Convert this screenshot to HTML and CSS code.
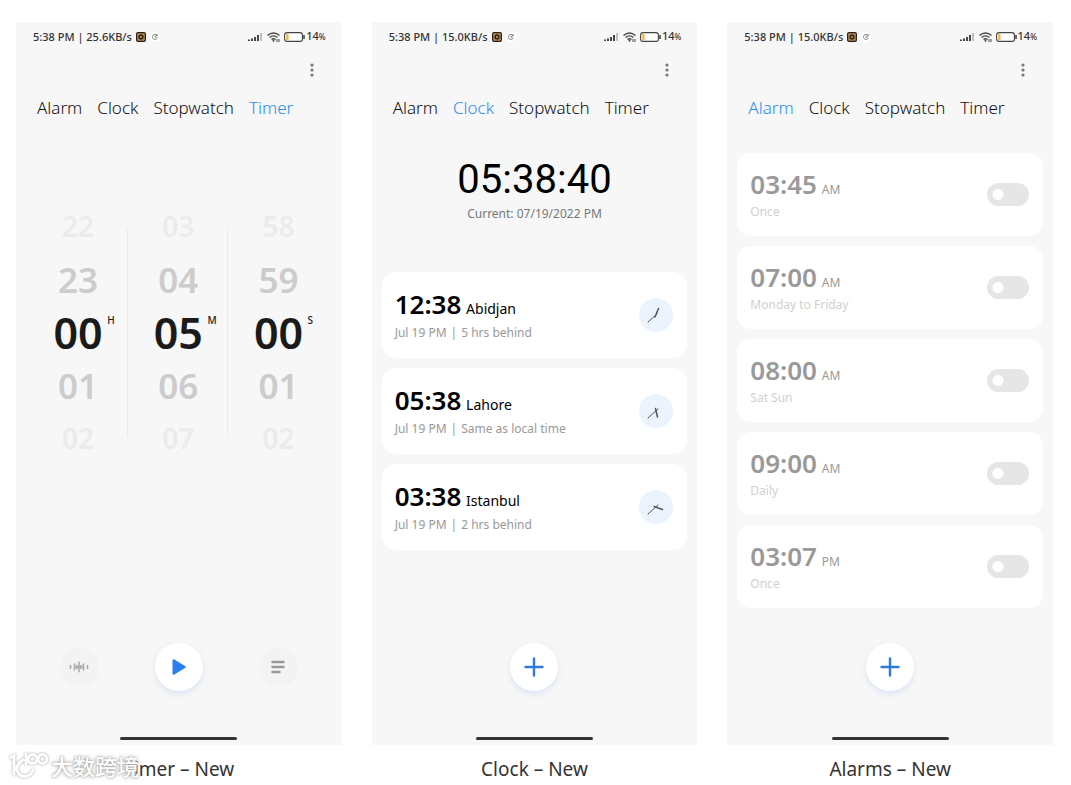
FILE: index.html
```html
<!DOCTYPE html>
<html lang="en">
<head>
    <meta charset="UTF-8">
    <meta name="viewport" content="width=device-width, initial-scale=1.0">
    <title>Clock App</title>
    <link rel="stylesheet" href="styles.css">
</head>
<body>

<!-- SHARED ICONS -->
<svg class="hidden">
    <symbol id="chip" viewBox="0 0 10 10">
        <rect width="10" height="10" rx="2" fill="#2b211a"/>
        <rect x="1.2" y="1.2" width="7.6" height="7.6" rx="1" fill="#b88f58"/>
        <path d="M5 1.800v6.400M1.800 5h6.400M2.800 2.800l4.400 4.400M7.200 2.800L2.800 7.200" stroke="#2b211a" stroke-width="1.100"/>
        <circle cx="5" cy="5" r="2" fill="#2b211a"/>
        <circle cx="5" cy="5" r="1" fill="#d6a765"/>
    </symbol>
    <symbol id="sync" viewBox="0 0 10 10">
        <circle cx="5" cy="5" r="5" fill="#fff"/>
        <path d="M7 3.4A2.5 2.5 0 1 0 7.4 5.6M5 3.8V5.2H6.4M7.3 2.2V3.8H5.8" fill="none" stroke="#555" stroke-width="0.7"/>
    </symbol>
    <symbol id="status" viewBox="0 0 58 12">
        <path d="M1 10V8.5M4 10V7.5M7 10V6M10 10V4" stroke="#333" stroke-width="1.8"/>
        <path d="M13 10V2" stroke="#aaa" stroke-width="1.4"/>
        <g fill="none" stroke="#444" stroke-width="1.4">
            <path d="M19.5 4.5Q25.5 -.5 31.5 4.5M21.5 6.5Q25.5 3.2 29.5 6.5M23.5 8.4Q25.5 7 27.5 8.4"/>
        </g>
        <circle cx="25.5" cy="9.8" r="1" fill="#444"/>
        <path d="M29 8v3M31 8v3" stroke="#444" stroke-width="1"/>
        <rect x="36.6" y="1.6" width="17.8" height="8.8" rx="2.5" fill="#fff" stroke="#444" stroke-width="1.1"/>
        <rect x="38.3" y="3" width="2.2" height="6" fill="#f0b040"/>
        <path d="M56 4v4" stroke="#444" stroke-width="1.6"/>
    </symbol>
    <symbol id="dots" viewBox="0 0 4 14">
        <circle cx="2" cy="2" r="1.6"/><circle cx="2" cy="7" r="1.6"/><circle cx="2" cy="12" r="1.6"/>
    </symbol>
    <symbol id="plus" viewBox="0 0 20 20">
        <path d="M10 1.5v17M1.5 10h17" stroke="#2e7bdc" stroke-width="2.4" stroke-linecap="round"/>
    </symbol>
</svg>

<main class="screens">
    <!-- TIMER -->
    <figure class="screen">
        <section class="phone">
            <div class="status">
                <span>5:38 PM | 25.6KB/s</span>
                <svg class="small-icon"><use href="#chip"/></svg>
                <svg class="small-icon"><use href="#sync"/></svg>
                <svg class="status-icons"><use href="#status"/></svg>
                <span>14<small>%</small></span>
            </div>
            <button class="menu-btn" aria-label="More options"><svg><use href="#dots"/></svg></button>
            <nav class="tabs">
                <a href="#alarm">Alarm</a>
                <a href="#clock">Clock</a>
                <a href="#stopwatch">Stopwatch</a>
                <a href="#timer" class="active">Timer</a>
            </nav>
            <div class="wheels">
                <div class="wheel">
                    <span class="far">22</span>
                    <span class="near">23</span>
                    <span class="current">00<sup>H</sup></span>
                    <span class="near">01</span>
                    <span class="far">02</span>
                </div>
                <div class="wheel">
                    <span class="far">03</span>
                    <span class="near">04</span>
                    <span class="current">05<sup>M</sup></span>
                    <span class="near">06</span>
                    <span class="far">07</span>
                </div>
                <div class="wheel">
                    <span class="far">58</span>
                    <span class="near">59</span>
                    <span class="current">00<sup>S</sup></span>
                    <span class="near">01</span>
                    <span class="far">02</span>
                </div>
            </div>
            <div class="actions">
                <button class="side-btn" aria-label="Sound">
                    <svg width="20" height="12" viewBox="0 0 20 12">
                        <path d="M1.5 4.5v3M5.5 3v6M8 4.500v3M10 1.2v9.6M12 4.5v3M14.5 3v6M18.5 4.5v3M5.5 6h9" stroke="#aaa" stroke-width="1.6" stroke-linecap="round"/>
                    </svg>
                </button>
                <button class="main-btn" aria-label="Start">
                    <svg width="16" height="18" viewBox="0 0 16 18">
                        <path d="M2.500 2.2v13.6L13.8 9z" fill="#2680f0" stroke="#2680f0" stroke-width="2" stroke-linejoin="round"/>
                    </svg>
                </button>
                <button class="side-btn" aria-label="Timer list">
                    <svg width="14" height="14" viewBox="0 0 14 14">
                        <path d="M1.5 2h11M1.5 7h11M1.5 12h7" stroke="#999" stroke-width="2.4" stroke-linecap="round"/>
                    </svg>
                </button>
            </div>
            <div class="home-bar"></div>
        </section>
        <figcaption>Timer – New</figcaption>
    </figure>

    <!-- CLOCK -->
    <figure class="screen">
        <section class="phone">
            <div class="status">
                <span>5:38 PM | 15.0KB/s</span>
                <svg class="small-icon"><use href="#chip"/></svg>
                <svg class="small-icon"><use href="#sync"/></svg>
                <svg class="status-icons"><use href="#status"/></svg>
                <span>14<small>%</small></span>
            </div>
            <button class="menu-btn" aria-label="More options"><svg><use href="#dots"/></svg></button>
            <nav class="tabs">
                <a href="#alarm">Alarm</a>
                <a href="#clock" class="active">Clock</a>
                <a href="#stopwatch">Stopwatch</a>
                <a href="#timer">Timer</a>
            </nav>
            <div class="now">
                <div class="now-time">05:38:40</div>
                <div class="now-date">Current: 07/19/2022 PM</div>
            </div>
            <div class="cards clocks">
                <div class="card">
                    <div>
                        <div class="time">12:38 <span>Abidjan</span></div>
                        <div class="note">Jul 19 PM<i>|</i>5 hrs behind</div>
                    </div>
                    <svg class="dial" viewBox="0 0 34 34">
                        <circle cx="17" cy="17" r="17"/>
                        <path d="M18 16L9 24"/><path class="hour" d="M16 19L19.5 10.5"/>
                    </svg>
                </div>
                <div class="card">
                    <div>
                        <div class="time">05:38 <span>Lahore</span></div>
                        <div class="note">Jul 19 PM<i>|</i>Same as local time</div>
                    </div>
                    <svg class="dial" viewBox="0 0 34 34">
                        <circle cx="17" cy="17" r="17"/>
                        <path d="M19 15L9 24"/><path class="hour" d="M16.5 14.5L18.5 23"/>
                    </svg>
                </div>
                <div class="card">
                    <div>
                        <div class="time">03:38 <span>Istanbul</span></div>
                        <div class="note">Jul 19 PM<i>|</i>2 hrs behind</div>
                    </div>
                    <svg class="dial" viewBox="0 0 34 34">
                        <circle cx="17" cy="17" r="17"/>
                        <path d="M19 15L9 24"/><path class="hour" d="M15 16.5L23.5 19.5"/>
                    </svg>
                </div>
            </div>
            <div class="actions">
                <button class="main-btn" aria-label="Add city"><svg width="20" height="20"><use href="#plus"/></svg></button>
            </div>
            <div class="home-bar"></div>
        </section>
        <figcaption>Clock – New</figcaption>
    </figure>

    <!-- ALARMS -->
    <figure class="screen">
        <section class="phone">
            <div class="status">
                <span>5:38 PM | 15.0KB/s</span>
                <svg class="small-icon"><use href="#chip"/></svg>
                <svg class="small-icon"><use href="#sync"/></svg>
                <svg class="status-icons"><use href="#status"/></svg>
                <span>14<small>%</small></span>
            </div>
            <button class="menu-btn" aria-label="More options"><svg><use href="#dots"/></svg></button>
            <nav class="tabs">
                <a href="#alarm" class="active">Alarm</a>
                <a href="#clock">Clock</a>
                <a href="#stopwatch">Stopwatch</a>
                <a href="#timer">Timer</a>
            </nav>
            <div class="cards alarms">
                <div class="card">
                    <label for="alarm1">
                        <span class="time">03:45 <span>AM</span></span>
                        <span class="note">Once</span>
                    </label>
                    <input type="checkbox" class="toggle" id="alarm1">
                </div>
                <div class="card">
                    <label for="alarm2">
                        <span class="time">07:00 <span>AM</span></span>
                        <span class="note">Monday to Friday</span>
                    </label>
                    <input type="checkbox" class="toggle" id="alarm2">
                </div>
                <div class="card">
                    <label for="alarm3">
                        <span class="time">08:00 <span>AM</span></span>
                        <span class="note">Sat Sun</span>
                    </label>
                    <input type="checkbox" class="toggle" id="alarm3">
                </div>
                <div class="card">
                    <label for="alarm4">
                        <span class="time">09:00 <span>AM</span></span>
                        <span class="note">Daily</span>
                    </label>
                    <input type="checkbox" class="toggle" id="alarm4">
                </div>
                <div class="card">
                    <label for="alarm5">
                        <span class="time">03:07 <span>PM</span></span>
                        <span class="note">Once</span>
                    </label>
                    <input type="checkbox" class="toggle" id="alarm5">
                </div>
            </div>
            <div class="actions">
                <button class="main-btn" aria-label="Add alarm"><svg width="20" height="20"><use href="#plus"/></svg></button>
            </div>
            <div class="home-bar"></div>
        </section>
        <figcaption>Alarms – New</figcaption>
    </figure>
</main>

<!-- WATERMARK -->
<div class="watermark">
    <svg width="42" height="30" viewBox="0 0 42 30" fill="none" stroke="#fff" stroke-width="3" stroke-linecap="round">
        <path d="M3 6.5L6 5V23M15 9Q8 13 9 19Q11 26 17 25.5Q23 25 25 19M18 3V13"/>
        <circle cx="24.5" cy="8" r="4.5"/>
        <circle cx="34.5" cy="8" r="4.5"/>
    </svg>
    <span>大数跨境</span>
</div>

</body>
</html>
```
FILE: styles.css
```css
* {
    box-sizing: border-box;
}
body {
    margin: 0;
    padding: 22px 18px 0 16px;
    font-family: "Noto Sans", "Noto Sans CJK SC", sans-serif;
    background: #fff;
    color: #111;
}
.hidden {
    display: none;
}
button {
    padding: 0;
    border: none;
    background: none;
    cursor: pointer;
}
.screens {
    display: grid;
    grid-template-columns: repeat(3, 1fr);
    gap: 30px;
}
.screen {
    margin: 0;
}
.phone {
    display: flex;
    flex-direction: column;
    min-height: calc(100vh - 62px);
    padding-bottom: 5px;
    background: #f7f7f7;
}
figcaption {
    padding-top: 10px;
    text-align: center;
    font-size: 19px;
    line-height: 28px;
    color: #333;
}

/* status bar */
.status {
    display: flex;
    align-items: center;
    gap: 4px;
    padding: 6px 16px 0 17px;
    font-size: 11px;
    line-height: 16px;
    font-weight: 500;
    color: #333;
}
.status small {
    font-size: 8px;
}
.small-icon {
    width: 10px;
    height: 10px;
}
.status-icons {
    width: 58px;
    height: 12px;
    margin: 0 -4px 0 auto;
}
.menu-btn {
    align-self: flex-end;
    display: flex;
    padding: 18px 28px;
}
.menu-btn svg {
    width: 4px;
    height: 14px;
    fill: #777;
}

/* tabs */
.tabs {
    display: flex;
    gap: 15px;
    padding: 0 21px;
    font-size: 17px;
    line-height: 26px;
    font-weight: 300;
}
.tabs a {
    color: #111;
    text-decoration: none;
}
.tabs .active {
    color: #2d8cf0;
}

/* timer wheels */
.wheels {
    display: grid;
    grid-template-columns: repeat(3, 1fr);
    padding: 79px 13px 0 12px;
}
.wheel {
    display: flex;
    flex-direction: column;
    text-align: center;
    line-height: 53px;
    font-weight: 600;
    background: linear-gradient(#ececec, #ececec) right center / 1px 208px no-repeat;
}
.wheel:last-child {
    background: none;
}
.far {
    font-size: 28px;
    color: #ebebeb;
}
.near {
    font-size: 35px;
    color: #ccc;
}
.current {
    position: relative;
    font-size: 43px;
    color: #1a1a1a;
}
.current sup {
    position: absolute;
    top: 8px;
    left: 79%;
    font-size: 10px;
    line-height: 12px;
    font-weight: 500;
}

/* current time */
.now {
    padding-top: 33px;
    text-align: center;
}
.now-time {
    font-family: Roboto, sans-serif;
    font-size: 40px;
    line-height: 52px;
    color: #000;
}
.now-date {
    font-size: 12px;
    line-height: 16px;
    color: #777;
}

/* cards */
.cards {
    display: flex;
    flex-direction: column;
    gap: 10px;
    padding: 0 10px;
}
.card {
    display: flex;
    align-items: center;
    justify-content: space-between;
    padding: 0 14px 0 13px;
    border-radius: 14px;
    background: #fff;
}
.clocks {
    padding-top: 50px;
}
.clocks .card {
    height: 86px;
}
.alarms {
    padding-top: 32px;
}
.alarms .card {
    height: 83px;
}
.time {
    display: block;
    font-size: 26px;
    line-height: 30px;
    font-weight: 600;
    color: #000;
}
.time span {
    margin-left: -2px;
    font-size: 14px;
    font-weight: 400;
}
.note {
    display: block;
    font-size: 12px;
    line-height: 18px;
    color: #999;
}
.note i {
    margin: 0 4px;
    font-style: normal;
}
.alarms .time {
    line-height: 28px;
    color: #999;
}
.alarms .time span {
    font-size: 12px;
}
.alarms .note {
    line-height: 16px;
    color: #d0d0d0;
}
.dial {
    width: 34px;
    height: 34px;
    fill: #ebf3fd;
    stroke-linecap: round;
}
.dial path {
    stroke: #555;
    stroke-width: 1;
}
.dial .hour {
    stroke-width: 1.5;
}
.toggle {
    appearance: none;
    width: 42px;
    height: 23px;
    margin: 0;
    border-radius: 12px;
    background: radial-gradient(circle at 11px 50%, #fff 5px, #e6e6e6 6px);
    cursor: pointer;
}
.toggle:checked {
    background: radial-gradient(circle at 31px 50%, #fff 5px, #2d8cf0 6px);
}

/* bottom buttons */
.actions {
    display: flex;
    align-items: center;
    justify-content: center;
    gap: 56px;
    margin-top: auto;
    padding-bottom: 46px;
}
.actions button {
    display: flex;
    align-items: center;
    justify-content: center;
    border-radius: 50%;
}
.main-btn {
    width: 48px;
    height: 48px;
    background: #fff;
    box-shadow: 0 3px 6px rgba(60, 130, 220, 0.15);
}
.side-btn {
    width: 39px;
    height: 39px;
    background: #f3f3f3;
}
.home-bar {
    width: 36%;
    height: 3px;
    margin: 0 auto;
    border-radius: 2px;
    background: #333;
}

.watermark {
    position: absolute;
    left: 8px;
    bottom: 4px;
    display: flex;
    align-items: center;
    gap: 1px;
    font-size: 22px;
    line-height: 30px;
    font-weight: 500;
    color: #fff;
    text-shadow: 0 0 2px #999, 0 0 4px #aaa;
}
.watermark svg {
    filter: drop-shadow(0 0 1px #999);
}
```
